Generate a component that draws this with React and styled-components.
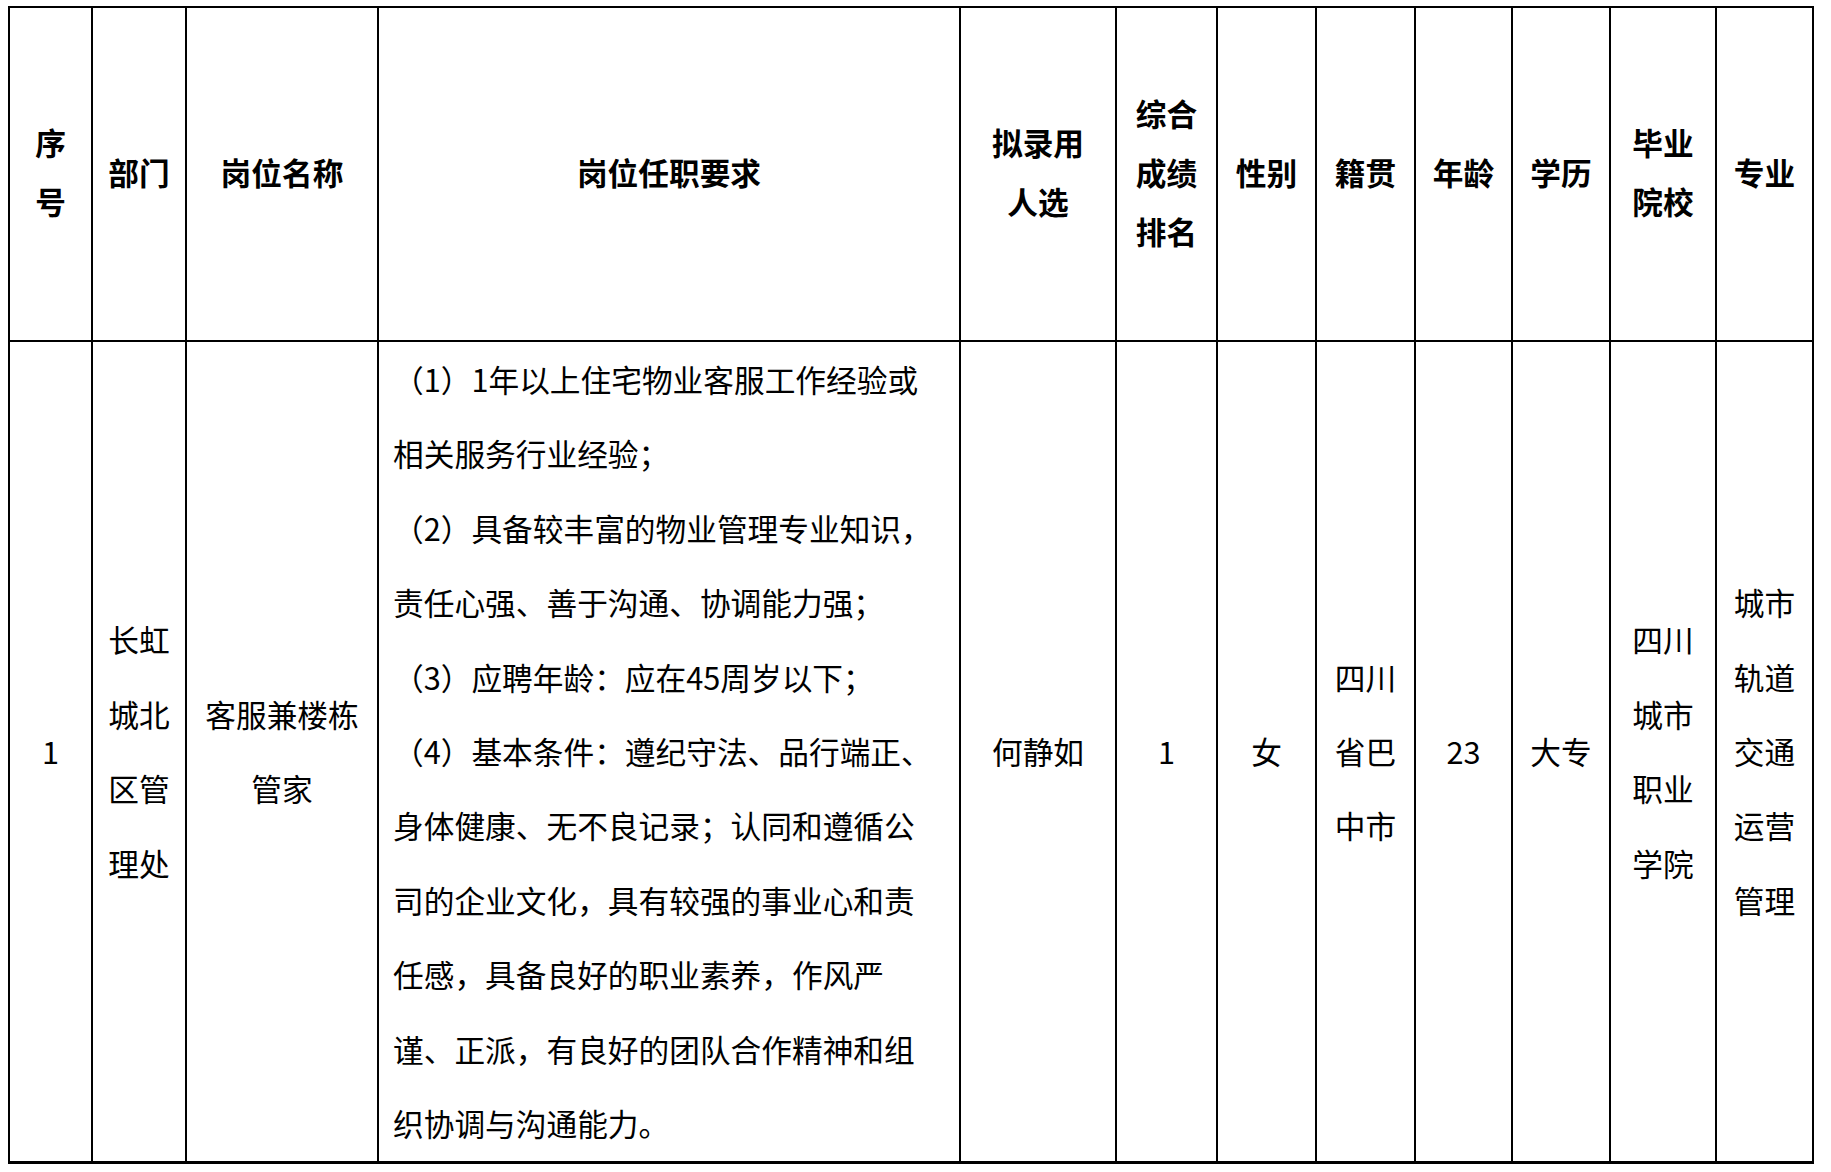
import React from 'react';
import styled, { createGlobalStyle } from 'styled-components';

const GlobalStyle = createGlobalStyle`
  body {
    margin: 6px 8px;
    background: #fff;
    font-family: "Noto Sans CJK SC", "Noto Sans", sans-serif;
    color: #000;
  }
`;

const Table = styled.table`
  width: ${(p) => p.$width}px;
  border-collapse: collapse;
  table-layout: fixed;
  border: 2px solid #000;
  border-bottom-width: 3px;
`;

const Head = styled.th`
  height: 326px;
  padding: 0 4px 6px;
  border: 2px solid #000;
  font-size: 30.7px;
  font-weight: 700;
  line-height: 59px;
  text-align: center;
  vertical-align: middle;
`;

const Cell = styled.td`
  padding: ${(p) => (p.$left ? '0 8px 1px 14px' : '0 6px 1px')};
  border: 2px solid #000;
  font-size: 30.7px;
  font-weight: 400;
  line-height: 74.4px;
  text-align: ${(p) => (p.$left ? 'left' : 'center')};
  vertical-align: middle;
  word-break: break-all;
`;

const Line = styled.div`
  white-space: nowrap;
`;

const widths = [83, 94, 192, 582, 156, 101, 99, 99, 97, 98, 106, 97];
const tableWidth = widths.reduce((a, b) => a + b, 0);

const headers = [
  ['序', '号'],
  ['部门'],
  ['岗位名称'],
  ['岗位任职要求'],
  ['拟录用', '人选'],
  ['综合', '成绩', '排名'],
  ['性别'],
  ['籍贯'],
  ['年龄'],
  ['学历'],
  ['毕业', '院校'],
  ['专业'],
];

const requirements = [
  '（1）1年以上住宅物业客服工作经验或',
  '相关服务行业经验；',
  '（2）具备较丰富的物业管理专业知识，',
  '责任心强、善于沟通、协调能力强；',
  '（3）应聘年龄：应在45周岁以下；',
  '（4）基本条件：遵纪守法、品行端正、',
  '身体健康、无不良记录；认同和遵循公',
  '司的企业文化，具有较强的事业心和责',
  '任感，具备良好的职业素养，作风严',
  '谨、正派，有良好的团队合作精神和组',
  '织协调与沟通能力。',
];

export default function App() {
  return (
    <>
      <GlobalStyle />
      <Table $width={tableWidth}>
        <colgroup>
          {widths.map((w, i) => (
            <col key={i} style={{ width: w }} />
          ))}
        </colgroup>
        <thead>
          <tr>
            {headers.map((lines, i) => (
              <Head key={i}>
                {lines.map((l) => (
                  <Line key={l}>{l}</Line>
                ))}
              </Head>
            ))}
          </tr>
        </thead>
        <tbody>
          <tr>
            <Cell>1</Cell>
            <Cell>长虹城北区管理处</Cell>
            <Cell>客服兼楼栋管家</Cell>
            <Cell $left>
              {requirements.map((l) => (
                <Line key={l}>{l}</Line>
              ))}
            </Cell>
            <Cell>何静如</Cell>
            <Cell>1</Cell>
            <Cell>女</Cell>
            <Cell>四川省巴中市</Cell>
            <Cell>23</Cell>
            <Cell>大专</Cell>
            <Cell>四川城市职业学院</Cell>
            <Cell>城市轨道交通运营管理</Cell>
          </tr>
        </tbody>
      </Table>
    </>
  );
}
